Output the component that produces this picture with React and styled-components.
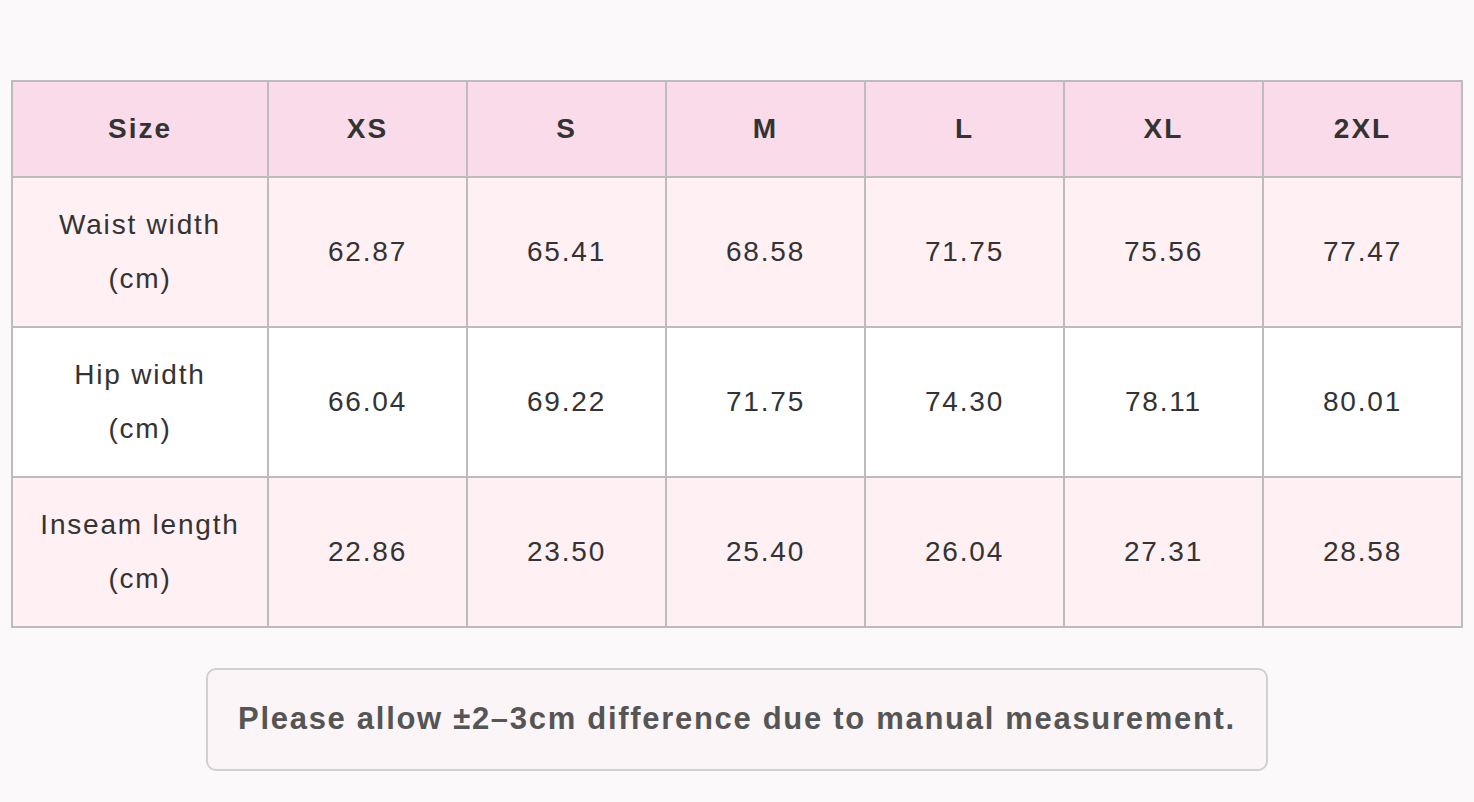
import React from "react";
import styled, { createGlobalStyle } from "styled-components";

const Global = createGlobalStyle`
  html, body { margin: 0; padding: 0; background: #fcf9fa; }
  body { font-family: "Liberation Sans", Arial, sans-serif; color: #333; }
`;

const Page = styled.div`
  padding: 80px 11px 32px 11px;
  display: flex;
  flex-direction: column;
  align-items: center;
  gap: 40px;
`;

const Table = styled.table`
  width: 1452px;
  border-collapse: collapse;
  table-layout: fixed;
  border: 2px solid #bcbcbc;
`;

const Th = styled.th`
  background: #f9dbe9;
  border: 2px solid #bcbcbc;
  font-size: 28px;
  font-weight: 700;
  letter-spacing: 2px;
  line-height: 54px;
  padding: 20px 0;
  text-align: center;
  color: #333;
`;

const Row = styled.tr`
  background: ${(p) => (p.$pink ? "#fff0f4" : "#ffffff")};
`;

const Td = styled.td`
  border: 2px solid #bcbcbc;
  font-size: 28px;
  letter-spacing: 1.8px;
  line-height: 54px;
  padding: 20px 0;
  text-align: center;
  color: #333;
`;

const Note = styled.div`
  border: 2px solid #d0d0d0;
  border-radius: 10px;
  background: #fbf5f7;
  padding: 29px 30px 30px;
  font-size: 31px;
  font-weight: 700;
  letter-spacing: 1.7px;
  line-height: 40px;
  color: #555;
  white-space: nowrap;
`;

const sizes = ["XS", "S", "M", "L", "XL", "2XL"];
const rows = [
  { label: ["Waist width", "(cm)"], vals: ["62.87", "65.41", "68.58", "71.75", "75.56", "77.47"], pink: true },
  { label: ["Hip width", "(cm)"], vals: ["66.04", "69.22", "71.75", "74.30", "78.11", "80.01"], pink: false },
  { label: ["Inseam length", "(cm)"], vals: ["22.86", "23.50", "25.40", "26.04", "27.31", "28.58"], pink: true },
];

export default function App() {
  return (
    <>
      <Global />
      <Page>
        <Table>
          <colgroup>
            <col style={{ width: 256 }} />
            {sizes.map((s) => (
              <col key={s} />
            ))}
          </colgroup>
          <thead>
            <tr>
              <Th>Size</Th>
              {sizes.map((s) => (
                <Th key={s}>{s}</Th>
              ))}
            </tr>
          </thead>
          <tbody>
            {rows.map((r) => (
              <Row key={r.label[0]} $pink={r.pink}>
                <Td>
                  {r.label[0]}
                  <br />
                  {r.label[1]}
                </Td>
                {r.vals.map((v, i) => (
                  <Td key={i}>{v}</Td>
                ))}
              </Row>
            ))}
          </tbody>
        </Table>
        <Note>Please allow ±2–3cm difference due to manual measurement.</Note>
      </Page>
    </>
  );
}
